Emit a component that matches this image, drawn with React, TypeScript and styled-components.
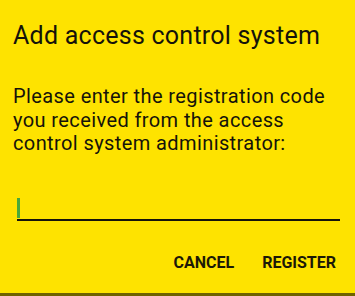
import styled, { createGlobalStyle } from "styled-components";

const GlobalStyle = createGlobalStyle`
  html, body {
    margin: 0;
    padding: 0;
    background: #fee300;
  }
  body {
    font-family: Roboto, "Liberation Sans", sans-serif;
  }
`;

const Dialog = styled.div`
  width: 355px;
  height: 296px;
  box-sizing: border-box;
  background: #fee300;
  border-bottom: 3px solid #6e6200;
  display: flex;
  flex-direction: column;
  padding: 20px 12px 0 13px;
`;

const Title = styled.h1`
  margin: 0;
  font-size: 25px;
  font-weight: 400;
  line-height: 32px;
  letter-spacing: 0.25px;
  color: #15130a;
`;

const Message = styled.p`
  margin: 33px 0 0;
  font-size: 20px;
  line-height: 23.5px;
  letter-spacing: 0.4px;
  color: #15130a;
`;

const Field = styled.div`
  margin-top: 42px;
  margin-left: 4px;
  margin-right: 3px;
  height: 21px;
  border-bottom: 2px solid #15130a;
  display: flex;
  align-items: flex-start;
`;

const Cursor = styled.span`
  width: 3px;
  height: 20px;
  background: #49a83a;
`;

const Actions = styled.div`
  display: flex;
  justify-content: flex-end;
  gap: 28px;
  margin-top: 32px;
  padding-right: 7px;
`;

const ActionButton = styled.button`
  border: none;
  background: none;
  padding: 0;
  font-family: Roboto, "Liberation Sans", sans-serif;
  font-size: 16px;
  line-height: 20px;
  font-weight: 700;
  text-transform: uppercase;
  color: #1c1907;
`;

export default function App() {
  return (
    <>
      <GlobalStyle />
      <Dialog>
        <Title>Add access control system</Title>
        <Message>
          Please enter the registration code you received from the access
          control system administrator:
        </Message>
        <Field>
          <Cursor />
        </Field>
        <Actions>
          <ActionButton>Cancel</ActionButton>
          <ActionButton>Register</ActionButton>
        </Actions>
      </Dialog>
    </>
  );
}
